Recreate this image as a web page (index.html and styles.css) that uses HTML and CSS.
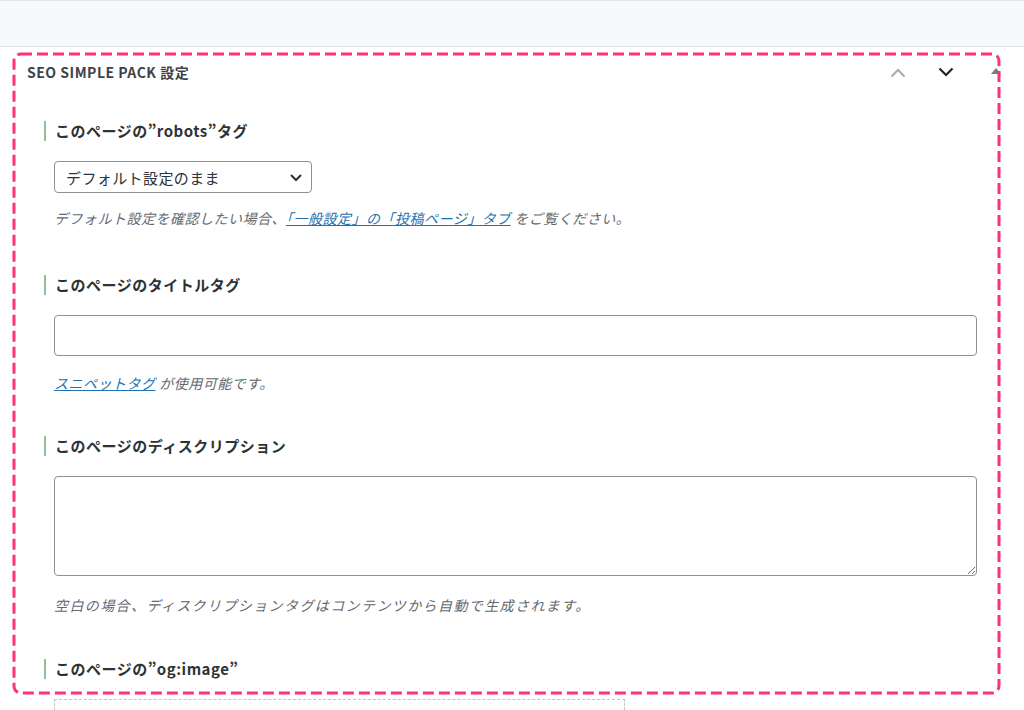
FILE: index.html
```html
<!DOCTYPE html>
<html lang="ja">
<head>
<meta charset="utf-8">
<title>SEO SIMPLE PACK 設定</title>
<link rel="stylesheet" href="styles.css">
</head>
<body>
<div class="topbar"></div>
<div class="postbox">
  <div class="postbox-header">
    <h2 class="hndle">SEO SIMPLE PACK 設定</h2>
    <div class="handle-actions">
      <button class="hbtn up" aria-label="上へ移動">
        <svg width="16" height="10" viewBox="0 0 16 10"><path d="M1.5 8.5 L8 2 L14.5 8.5" fill="none" stroke="#a7aaad" stroke-width="2"/></svg>
      </button>
      <button class="hbtn down" aria-label="下へ移動">
        <svg width="16" height="10" viewBox="0 0 16 10"><path d="M1.5 1.5 L8 8 L14.5 1.5" fill="none" stroke="#1d2327" stroke-width="2.2"/></svg>
      </button>
      <button class="hbtn toggle" aria-label="パネルを切り替え">
        <svg width="10" height="6" viewBox="0 0 10 6"><path d="M0 6 L5 0 L10 6 Z" fill="#787c82"/></svg>
      </button>
    </div>
  </div>
  <div class="inside">
    <div class="field f1">
      <h3 class="field-title">このページの”robots”タグ</h3>
      <div class="select">
        <span>デフォルト設定のまま</span>
        <svg width="14" height="9" viewBox="0 0 14 9"><path d="M2 2 L7 7 L12 2" fill="none" stroke="#2c3338" stroke-width="2"/></svg>
      </div>
      <p class="desc">デフォルト設定を確認したい場合、<a href="#">「一般設定」の「投稿ページ」タブ</a> をご覧ください。</p>
    </div>
    <div class="field f2">
      <h3 class="field-title">このページのタイトルタグ</h3>
      <input class="text-input" type="text">
      <p class="desc"><a href="#">スニペットタグ</a> が使用可能です。</p>
    </div>
    <div class="field f3">
      <h3 class="field-title">このページのディスクリプション</h3>
      <textarea class="textarea"></textarea>
      <p class="desc">空白の場合、ディスクリプションタグはコンテンツから自動で生成されます。</p>
    </div>
    <div class="field last">
      <h3 class="field-title">このページの”og:image”</h3>
      <div class="image-box"></div>
    </div>
  </div>
</div>
<svg class="highlight" width="990" height="645" viewBox="0 0 990 645">
  <rect x="2" y="2" width="985" height="639" rx="7" ry="7" fill="none" stroke="#ff3370" stroke-width="3" stroke-dasharray="11 5"/>
</svg>
</body>
</html>
```

FILE: styles.css
```css
* { box-sizing: border-box; }
html, body { margin: 0; padding: 0; }
body {
  width: 1024px;
  height: 710px;
  overflow: hidden;
  background: #fff;
  font-family: "Noto Sans CJK JP", "Noto Sans", sans-serif;
  color: #1d2327;
  position: relative;
}
.topbar {
  height: 47px;
  background: #f8f9fa;
  border-top: 1px solid #e2e4e7;
  border-bottom: 1px solid #e2e4e7;
}
.postbox { background: #fff; }
.postbox-header {
  display: flex;
  align-items: center;
  justify-content: space-between;
  height: 50px;
  padding-left: 27px;
}
.hndle {
  margin: 0;
  font-size: 14px;
  font-weight: 600;
  color: #3c434a;
  letter-spacing: 0.5px;
}
.handle-actions {
  display: flex;
  align-items: center;
  height: 100%;
  margin-right: 10px;
}
.hbtn {
  background: none;
  border: 0;
  padding: 0;
  width: 48px;
  height: 36px;
  display: flex;
  align-items: center;
  justify-content: center;
}
.hbtn.down { margin-right: 8px; }
.hbtn.toggle { width: 36px; align-items: flex-start; padding-top: 14px; }
.hbtn.up { margin-top: 2px; }
.inside {
  padding: 24px 47px 0 44px;
}
.field.f1 { margin-bottom: 47px; }
.field.f2 { margin-bottom: 43px; }
.field.f3 { margin-bottom: 44px; }
.field-title {
  margin: 0 0 20px 0;
  border-left: 2px solid #93bf98;
  padding-left: 9px;
  font-size: 15px;
  font-weight: 700;
  line-height: 20px;
  letter-spacing: 0.5px;
  color: #2c3338;
}
.select {
  margin-left: 10px;
  width: 258px;
  height: 32px;
  border: 1px solid #8c8f94;
  border-radius: 4px;
  display: flex;
  align-items: center;
  justify-content: space-between;
  padding: 0 8px 0 11px;
  font-size: 15px;
  letter-spacing: 0.4px;
  color: #2c3338;
}
.desc {
  margin: 15px 0 0 10px;
  font-size: 14px;
  line-height: 20px;
  letter-spacing: 1.4px;
  font-style: italic;
  color: #646970;
}
.desc a { color: #2271b1; text-decoration: underline; }
.f1 .desc, .f2 .desc { letter-spacing: 0.5px; }
.text-input {
  display: block;
  margin-left: 10px;
  width: 923px;
  height: 41px;
  border: 1px solid #8c8f94;
  border-radius: 4px;
  background: #fff;
}
.text-input + .desc { margin-top: 17px; }
.textarea {
  display: block;
  margin-left: 10px;
  width: 923px;
  height: 100px;
  border: 1px solid #8c8f94;
  border-radius: 4px;
  background: #fff;
  resize: vertical;
}
.textarea + .desc { margin-top: 19px; }
.field.last { margin-bottom: 0; }
.image-box {
  margin-left: 10px;
  width: 571px;
  height: 11px;
  border: 1px dashed #c3c4c7;
  border-bottom: 0;
}
.highlight {
  position: absolute;
  left: 12px;
  top: 52px;
}
```
